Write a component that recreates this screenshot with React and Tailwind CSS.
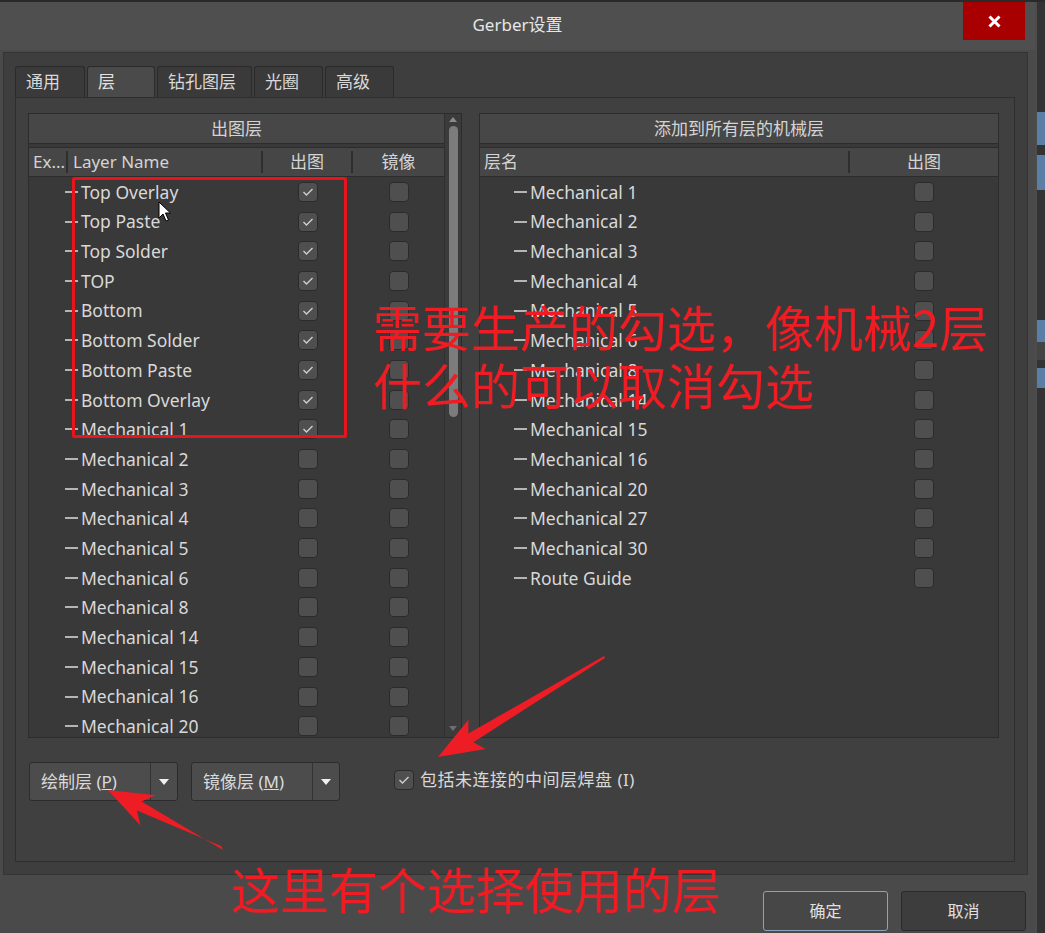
import React from "react"

const leftRows = [
  { name: "Top Overlay", on: true },
  { name: "Top Paste", on: true },
  { name: "Top Solder", on: true },
  { name: "TOP", on: true },
  { name: "Bottom", on: true },
  { name: "Bottom Solder", on: true },
  { name: "Bottom Paste", on: true },
  { name: "Bottom Overlay", on: true },
  { name: "Mechanical 1", on: true },
  { name: "Mechanical 2" },
  { name: "Mechanical 3" },
  { name: "Mechanical 4" },
  { name: "Mechanical 5" },
  { name: "Mechanical 6" },
  { name: "Mechanical 8" },
  { name: "Mechanical 14" },
  { name: "Mechanical 15" },
  { name: "Mechanical 16" },
  { name: "Mechanical 20" },
]

const rightRows = [
  "Mechanical 1",
  "Mechanical 2",
  "Mechanical 3",
  "Mechanical 4",
  "Mechanical 5",
  "Mechanical 6",
  "Mechanical 8",
  "Mechanical 14",
  "Mechanical 15",
  "Mechanical 16",
  "Mechanical 20",
  "Mechanical 27",
  "Mechanical 30",
  "Route Guide",
]

const tabs = [
  { label: "通用", w: "w-[70px]" },
  { label: "层", w: "w-[68px]", active: true },
  { label: "钻孔图层", w: "w-[95px]" },
  { label: "光圈", w: "w-[69px]" },
  { label: "高级", w: "w-[69px]" },
]

const Check = ({ on }) => (
  <div className="w-[20px] h-[20px] rounded-[4px] bg-[#4f4f4f] border border-[#2b2b2b] flex items-center justify-center">
    {on && (
      <svg width="12" height="10" viewBox="0 0 12 10">
        <path d="M1.5 5 L4.5 8 L10.5 2" fill="none" stroke="#cfcfcf" strokeWidth="1.4" />
      </svg>
    )}
  </div>
)

const Dash = () => <div className="w-[13px] h-[2px] bg-[#b5b5b5] mr-[3px]" />

const DropButton = ({ label, hot }) => (
  <div className="flex h-[39px] w-[149px] rounded-[3px] bg-[#4c4c4c] border border-[#2c2c2c] text-[17px] text-[#dadada]">
    <div className="flex-1 flex items-center pl-[11px] border-r border-[#333] whitespace-nowrap">
      {label}&nbsp;(<span className="underline">{hot}</span>)
    </div>
    <div className="w-[26px] flex items-center justify-center">
      <svg width="10" height="6" viewBox="0 0 10 6">
        <path d="M0 0 L10 0 L5 6 Z" fill="#f0f0f0" />
      </svg>
    </div>
  </div>
)

const App = () => {
  return (
    <div className="relative w-[1045px] h-[933px] overflow-hidden bg-[#2e2e2e] font-['Noto_Sans','Noto_Sans_CJK_SC',sans-serif] text-[#dadada]">
      <div className="h-[2px] bg-[#2a2a2a]" />
      <div className="flex h-[931px]">
        {/* dialog */}
        <div className="w-[1035px] flex flex-col bg-[#4a4a4a]">
          <div className="relative h-[48px] bg-[#4f4f4f] flex items-center justify-center">
            <span className="text-[17px] text-[#e6e6e6] -mt-[2px]">Gerber设置</span>
            <div className="absolute right-[10px] top-0 w-[62px] h-[38px] bg-[#a80000] flex items-center justify-center">
              <svg width="13" height="13" viewBox="0 0 13 13">
                <path d="M1.5 1.5 L11.5 11.5 M11.5 1.5 L1.5 11.5" stroke="#fff" strokeWidth="3" />
              </svg>
            </div>
          </div>

          <div className="mt-[2px] ml-[3px] w-[1025px] h-[823px] bg-[#3e3e3e] border border-[#343434] pt-[13px] pl-[11px]">
            {/* tabs */}
            <div className="flex gap-[2px] h-[31px] items-end">
              {tabs.map((t) => (
                <div
                  key={t.label}
                  className={`${t.w} h-[31px] rounded-t-[3px] border border-b-0 border-[#2a2a2a] flex items-center pl-[10px] text-[17px] ${
                    t.active ? "bg-[#4a4a4a] text-[#e2e2e2]" : "bg-[#3a3a3a] text-[#d8d8d8]"
                  }`}
                >
                  {t.label}
                </div>
              ))}
            </div>

            {/* tab panel */}
            <div className="w-[1000px] h-[765px] bg-[#404040] border border-[#2e2e2e] pt-[15px] pl-[12px]">
              <div className="flex gap-[17px] h-[625px]">
                {/* left group */}
                <div className="w-[434px] h-[625px] flex border border-[#2c2c2c] bg-[#393939] overflow-hidden">
                  <div className="w-[415px] flex flex-col">
                    <div className="h-[30px] bg-[#474747] border-b border-[#2c2c2c] flex items-center justify-center text-[17px] text-[#d4d4d4]">
                      出图层
                    </div>
                    <div className="h-[3px]" />
                    <div className="h-[30px] bg-[#464646] border-y border-[#2c2c2c] flex items-center text-[17px] text-[#d4d4d4]">
                      <div className="w-[39px] pl-[4px] border-r-2 border-[#2e2e2e] h-[22px] flex items-center">Ex...</div>
                      <div className="w-[195px] pl-[5px] border-r-2 border-[#2e2e2e] h-[22px] flex items-center">Layer Name</div>
                      <div className="w-[90px] border-r-2 border-[#2e2e2e] h-[22px] flex items-center justify-center">出图</div>
                      <div className="w-[91px] flex items-center justify-center">镜像</div>
                    </div>
                    <div className="flex-1 overflow-hidden">
                      {leftRows.map((r) => (
                        <div key={r.name} className="h-[29.7px] flex items-center text-[17.5px] text-[#d8d8d8]">
                          <div className="w-[234px] pl-[36px] flex items-center whitespace-nowrap">
                            <Dash />
                            {r.name}
                          </div>
                          <div className="w-[90px] flex justify-center">
                            <Check on={r.on} />
                          </div>
                          <div className="w-[91px] flex justify-center">
                            <Check />
                          </div>
                        </div>
                      ))}
                    </div>
                  </div>
                  {/* scrollbar */}
                  <div className="w-[19px] flex flex-col items-center bg-[#3b3b3b] border-l border-[#303030]">
                    <svg className="mt-[3px]" width="8" height="5" viewBox="0 0 8 5">
                      <path d="M0 5 L4 0 L8 5 Z" fill="#8a8a8a" />
                    </svg>
                    <div className="mt-[4px] w-[9px] h-[291px] rounded-full bg-[#7c7c7c]" />
                    <div className="flex-1" />
                    <svg className="mb-[6px]" width="8" height="5" viewBox="0 0 8 5">
                      <path d="M0 0 L8 0 L4 5 Z" fill="#6e6e6e" />
                    </svg>
                  </div>
                </div>

                {/* right group */}
                <div className="w-[520px] h-[625px] flex flex-col border border-[#2c2c2c] bg-[#393939] overflow-hidden">
                  <div className="h-[30px] bg-[#474747] border-b border-[#2c2c2c] flex items-center justify-center text-[17px] text-[#d4d4d4]">
                    添加到所有层的机械层
                  </div>
                  <div className="h-[3px]" />
                  <div className="h-[30px] bg-[#464646] border-y border-[#2c2c2c] flex items-center text-[17px] text-[#d4d4d4]">
                    <div className="w-[370px] pl-[4px] border-r-2 border-[#2e2e2e] h-[22px] flex items-center">层名</div>
                    <div className="flex-1 flex items-center justify-center">出图</div>
                  </div>
                  {rightRows.map((name) => (
                    <div key={name} className="h-[29.7px] flex items-center text-[17.5px] text-[#d8d8d8]">
                      <div className="w-[370px] pl-[34px] flex items-center whitespace-nowrap">
                        <Dash />
                        {name}
                      </div>
                      <div className="flex-1 flex justify-center">
                        <Check />
                      </div>
                    </div>
                  ))}
                </div>
              </div>

              {/* bottom controls */}
              <div className="flex items-center mt-[24px] pl-[1px]">
                <DropButton label="绘制层" hot="P" />
                <div className="w-[13px]" />
                <DropButton label="镜像层" hot="M" />
                <div className="ml-[54px] flex items-center gap-[6px] -mt-[4px]">
                  <Check on />
                  <span className="text-[17px] tracking-[0.5px] text-[#d8d8d8]">包括未连接的中间层焊盘 (I)</span>
                </div>
              </div>
            </div>
          </div>

          {/* footer buttons */}
          <div className="flex justify-end gap-[13px] pr-[9px] pt-[16px]">
            <div className="w-[125px] h-[40px] rounded-[3px] border border-[#8ea3bb] bg-[#474747] flex items-center justify-center text-[16px] text-[#e0e0e0]">
              确定
            </div>
            <div className="w-[125px] h-[40px] rounded-[3px] border border-[#2a2a2a] bg-[#3d3d3d] flex items-center justify-center text-[16px] text-[#e0e0e0]">
              取消
            </div>
          </div>
        </div>

        {/* neighbouring window edge */}
        <div className="flex-1 flex flex-col bg-[#333] border-l-2 border-[#4c4c4c]">
          <div className="h-[110px]" />
          <div className="h-[33px] bg-[#5b7ea6]" />
          <div className="h-[10px]" />
          <div className="h-[35px] bg-[#5b7ea6]" />
          <div className="h-[130px]" />
          <div className="h-[22px] bg-[#5b7ea6]" />
          <div className="h-[18px] bg-[#444]" />
          <div className="h-[8px]" />
          <div className="h-[20px] bg-[#5b7ea6]" />
        </div>
      </div>

      {/* annotations */}
      <div className="absolute left-[72px] top-[177px] w-[275px] h-[261px] border-[3px] border-[#e8141c] rounded-[2px]" />

      <svg className="absolute left-[158px] top-[201px]" width="14" height="22" viewBox="0 0 14 22">
        <path d="M1 1 L1 17 L5 13 L8 20 L10.5 19 L7.5 12 L12.5 12 Z" fill="#fff" stroke="#000" strokeWidth="1" />
      </svg>

      <div className="absolute left-[373px] top-[297px] text-[49px] leading-[58px] text-[#ef1c24] font-['Noto_Sans_CJK_SC',sans-serif] whitespace-nowrap">
        <div>需要生产的勾选，像机械2层</div>
        <div>什么的可以取消勾选</div>
      </div>

      <div className="absolute left-[231px] top-[859px] text-[49px] leading-[58px] text-[#ef1c24] font-['Noto_Sans_CJK_SC',sans-serif] whitespace-nowrap">
        这里有个选择使用的层
      </div>

      <svg className="absolute inset-0 pointer-events-none" width="1045" height="933" viewBox="0 0 1045 933">
        <polygon
          points="605,658 473.4,742.2 485.4,749.1 438,757 468.4,719.7 468.4,733.6 604,656"
          fill="#ee1c25"
        />
        <polygon
          points="223,850 141.5,801.4 155.8,795.3 108,790 140.4,825.5 136.9,810.4 221,846"
          fill="#ee1c25"
        />
      </svg>
    </div>
  )
}

export default App
